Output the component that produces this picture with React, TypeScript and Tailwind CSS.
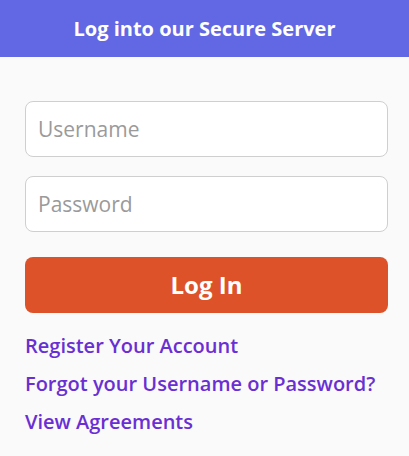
export default function App() {
  return (
    <div className="min-h-[456px] w-full bg-[#fafafa]" style={{ fontFamily: '"Open Sans", sans-serif' }}>
      <div className="flex h-[57px] items-center justify-center bg-[#6267e3]">
        <h1 className="text-[20px] font-bold text-white">Log into our Secure Server</h1>
      </div>
      <form className="flex flex-col pl-[25px] pr-[21px] pt-[44px]" onSubmit={(e) => e.preventDefault()}>
        <input
          type="text"
          placeholder="Username"
          className="h-[56px] w-full rounded-[8px] border border-[#cfcfcf] bg-white px-[12px] text-[21px] text-gray-700 placeholder:text-[#9a9a9a] outline-none"
        />
        <input
          type="password"
          placeholder="Password"
          className="mt-[19px] h-[56px] w-full rounded-[8px] border border-[#cfcfcf] bg-white px-[12px] text-[21px] text-gray-700 placeholder:text-[#9a9a9a] outline-none"
        />
        <button
          type="submit"
          className="mt-[25px] h-[56px] w-full rounded-[8px] bg-[#dd5228] text-[24px] font-bold text-white"
        >
          Log In
        </button>
        <div className="mt-[14px] flex flex-col">
          <a href="#" className="text-[20px] leading-[38px] font-semibold text-[#6a2fd3]">Register Your Account</a>
          <a href="#" className="text-[20px] leading-[38px] font-semibold text-[#6a2fd3]">Forgot your Username or Password?</a>
          <a href="#" className="text-[20px] leading-[38px] font-semibold text-[#6a2fd3]">View Agreements</a>
        </div>
      </form>
    </div>
  );
}
